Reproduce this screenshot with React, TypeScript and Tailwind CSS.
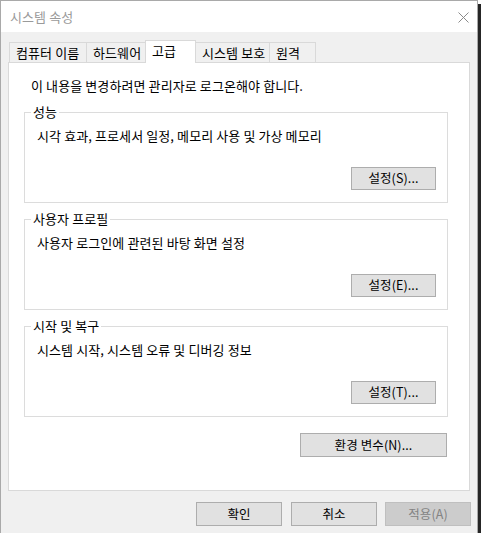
import React from 'react';

const tabs = [
  { label: '컴퓨터 이름', w: 'w-[78px]' },
  { label: '하드웨어', w: 'w-[60px]' },
  { label: '고급', w: 'w-[51px]', active: true },
  { label: '시스템 보호', w: 'w-[75px]' },
  { label: '원격', w: 'w-[47px]' },
];

const groups = [
  { title: '성능', desc: '시각 효과, 프로세서 일정, 메모리 사용 및 가상 메모리', btn: '설정(S)...' },
  { title: '사용자 프로필', desc: '사용자 로그인에 관련된 바탕 화면 설정', btn: '설정(E)...' },
  { title: '시작 및 복구', desc: '시스템 시작, 시스템 오류 및 디버깅 정보', btn: '설정(T)...' },
];

function Btn({ children, className = '', disabled = false }: { children: React.ReactNode; className?: string; disabled?: boolean }) {
  return (
    <button
      disabled={disabled}
      className={
        'flex items-center justify-center border text-[12.5px] leading-none ' +
        (disabled ? 'bg-[#cccccc] border-[#bfbfbf] text-[#838383] ' : 'bg-[#e1e1e1] border-[#adadad] text-black ') +
        className
      }
    >
      {children}
    </button>
  );
}

export default function App() {
  return (
    <div className="w-[481px] h-[533px] flex bg-white font-['Noto_Sans_CJK_KR','Malgun_Gothic',sans-serif] text-[13px] tracking-[0.1px] text-black overflow-hidden">
      <div className="w-[478px] h-[533px] flex flex-col border-x border-t border-[#a9a9a9] bg-[#f0f0f0]">
        {/* title bar */}
        <div className="h-[31px] bg-white flex items-center justify-between pl-[9px] pr-[8px]">
          <span className="text-[#9a9a9a] leading-[16px]">시스템 속성</span>
          <svg width="11" height="11" viewBox="0 0 11 11" className="mt-px">
            <path d="M0.5 0.5 L10.5 10.5 M10.5 0.5 L0.5 10.5" stroke="#8a8a8a" strokeWidth="1" fill="none" />
          </svg>
        </div>

        {/* tabs */}
        <div className="mt-[8px] ml-[8px] h-[22px] flex items-end relative z-10">
          {tabs.map((t, i) => (
            <div
              key={t.label}
              className={
                t.w +
                (i > 0 ? ' -ml-px' : '') +
                (t.active
                  ? ' h-[23px] -mb-px bg-white border-x border-t border-[#d9d9d9] flex items-center pl-[6px] pb-[3px] relative z-10'
                  : ' h-[20px] bg-[#f0f0f0] border-x border-t border-[#d9d9d9] flex items-center pl-[6px] pt-px')
              }
            >
              <span className="leading-[16px] whitespace-nowrap">{t.label}</span>
            </div>
          ))}
        </div>

        {/* panel */}
        <div className="ml-[7px] w-[462px] h-[429px] border border-[#d9d9d9] bg-white flex flex-col">
          <div className="pt-[15px] pl-[22px] leading-[16px] h-[31px]">이 내용을 변경하려면 관리자로 로그온해야 합니다.</div>

          <div className="ml-[15px] w-[424px] mt-[18px] flex flex-col gap-[16px]">
            {groups.map(g => (
              <div key={g.title} className="relative h-[91px] border border-[#dcdcdc] flex flex-col">
                <span className="absolute left-[6px] top-[-9px] px-[2px] bg-white leading-[16px]">{g.title}</span>
                <div className="pt-[15px] pl-[12px] leading-[16px] h-[31px]">{g.desc}</div>
                <div className="mt-[23px] flex justify-end pr-[11px]">
                  <Btn className="w-[85px] h-[23px]">{g.btn}</Btn>
                </div>
              </div>
            ))}
          </div>

          <div className="ml-[15px] w-[424px] mt-[16px] flex justify-end pr-px">
            <Btn className="w-[147px] h-[24px]">환경 변수(N)...</Btn>
          </div>
        </div>

        {/* dialog buttons */}
        <div className="mt-[11px] flex justify-end pr-[6px]">
          <Btn className="w-[86px] h-[24px]">확인</Btn>
          <Btn className="w-[86px] h-[24px] ml-[9px]">취소</Btn>
          <Btn className="w-[86px] h-[24px] ml-[8px]" disabled>적용(A)</Btn>
        </div>
      </div>
      <div className="flex-1 mt-[4px] bg-[#262626]" />
    </div>
  );
}
